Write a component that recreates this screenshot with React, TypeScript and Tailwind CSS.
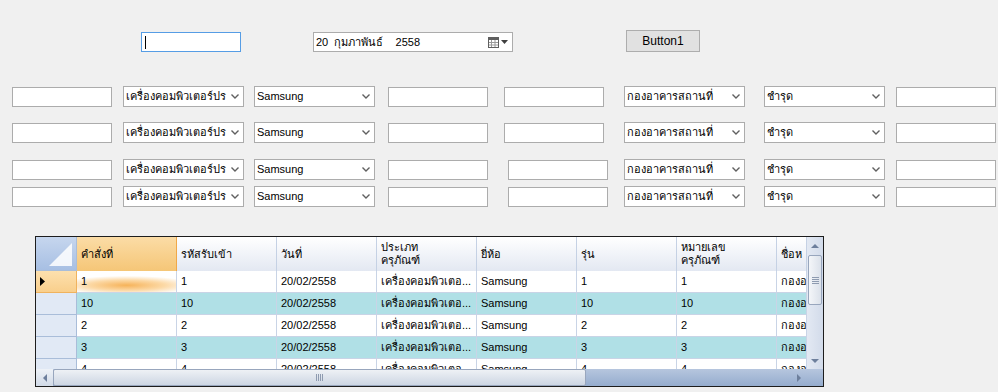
import React from 'react';

const FONT = "font-['Tahoma','Liberation_Sans','Noto_Sans',sans-serif]";

const TextBox: React.FC<{ focused?: boolean }> = ({ focused }) => (
  <div
    className={`w-[100px] h-[20px] bg-white border ${focused ? 'border-[#569de5]' : 'border-[#acacac]'} flex items-center`}
  >
    {focused ? <div className="ml-[3px] w-px h-[13px] bg-black" /> : null}
  </div>
);

const Chevron = () => (
  <svg width="8" height="5" viewBox="0 0 8 5" className="shrink-0">
    <path d="M0.5 0.5 L4 4 L7.5 0.5" fill="none" stroke="#606060" strokeWidth="1.4" />
  </svg>
);

const Combo: React.FC<{ text: string }> = ({ text }) => (
  <div className="w-[121px] h-[21px] bg-white border border-[#acacac] flex items-center pl-[2px] pr-[4px] gap-[3px]">
    <span className="flex-1 overflow-hidden whitespace-nowrap">{text}</span>
    <Chevron />
  </div>
);

const FormRow: React.FC<{ shifted?: boolean; className?: string }> = ({ shifted, className }) => (
  <div className={`flex items-start ${className ?? ''}`}>
    <div className="ml-[12px] mt-px">
      <TextBox />
    </div>
    <div className="ml-[11px]">
      <Combo text="เครื่องคอมพิวเตอร์ปร" />
    </div>
    <div className="ml-[10px]">
      <Combo text="Samsung" />
    </div>
    <div className="ml-[13px] mt-px">
      <TextBox />
    </div>
    <div className={`${shifted ? 'ml-[20px]' : 'ml-[16px]'} mt-px`}>
      <TextBox />
    </div>
    <div className={shifted ? 'ml-[16px]' : 'ml-[20px]'}>
      <Combo text="กองอาคารสถานที่" />
    </div>
    <div className="ml-[19px]">
      <Combo text="ชำรุด" />
    </div>
    <div className="ml-[11px] mt-px">
      <TextBox />
    </div>
  </div>
);

const columns = [
  ['คำสั่งที่'],
  ['รหัสรับเข้า'],
  ['วันที่'],
  ['ประเภท', 'ครุภัณฑ์'],
  ['ยี่ห้อ'],
  ['รุ่น'],
  ['หมายเลข', 'ครุภัณฑ์'],
  ['ชื่อห'],
];

const rows = ['1', '10', '2', '3', '4'];

const HeaderCell: React.FC<{ lines: string[]; selected?: boolean; last?: boolean }> = ({ lines, selected, last }) => (
  <div
    className={`${last ? 'w-[30px]' : 'w-[100px]'} h-full shrink-0 border-r flex flex-col justify-center pl-[4px] leading-[13px] overflow-hidden whitespace-nowrap ${
      selected
        ? 'bg-[linear-gradient(to_bottom,#fbdca6,#f5c677)] border-[#f0a848]'
        : 'bg-[linear-gradient(to_bottom,#ffffff,#e3e8f2)] border-[#c5d1e4]'
    }`}
  >
    {lines.map((l) => (
      <span key={l}>{l}</span>
    ))}
  </div>
);

const DataRow: React.FC<{ id: string; index: number }> = ({ id, index }) => {
  const teal = index % 2 === 1;
  const current = index === 0;
  const cells = [id, id, '20/02/2558', 'เครื่องคอมพิวเตอ...', 'Samsung', id, id, 'กองอา'];
  return (
    <div className="flex h-[22px] shrink-0">
      <div
        className={`w-[41px] h-full shrink-0 border-r border-b flex items-center pl-[4px] ${
          current
            ? 'bg-[linear-gradient(to_bottom,#fde0ae,#f9cf8c)] border-[#f0b35e]'
            : 'bg-[#e1e9f5] border-[#a9bdd9]'
        }`}
      >
        {current ? (
          <svg width="5" height="9" viewBox="0 0 5 9">
            <path d="M0 0 L5 4.5 L0 9 Z" fill="#000" />
          </svg>
        ) : null}
      </div>
      {cells.map((c, i) => (
        <div
          key={i}
          className={`${i === 7 ? 'w-[30px]' : 'w-[100px]'} h-full shrink-0 border-r border-b border-[#c9d4e6] flex items-center pl-[4px] overflow-hidden whitespace-nowrap ${
            current && i === 0
              ? 'bg-[radial-gradient(ellipse_70%_45%_at_50%_68%,#f6b35a,#fcd9a6_55%,#ffffff)]'
              : teal
              ? 'bg-[#b0e0e6]'
              : 'bg-white'
          }`}
        >
          {c}
        </div>
      ))}
    </div>
  );
};

const Arrow: React.FC<{ dir: 'up' | 'down' | 'left' | 'right' }> = ({ dir }) => {
  const d = {
    up: 'M0 4 L4 0 L8 4 Z',
    down: 'M0 0 L8 0 L4 4 Z',
    left: 'M4 0 L4 8 L0 4 Z',
    right: 'M0 0 L4 4 L0 8 Z',
  }[dir];
  const vertical = dir === 'up' || dir === 'down';
  return (
    <svg width={vertical ? 8 : 4} height={vertical ? 4 : 8} viewBox={vertical ? '0 0 8 4' : '0 0 4 8'}>
      <path d={d} fill="#6d7f9c" />
    </svg>
  );
};

const Grip: React.FC<{ vertical?: boolean }> = ({ vertical }) => (
  <div className={`flex ${vertical ? 'flex-col gap-[1px]' : 'flex-row gap-[1px]'}`}>
    {[0, 1, 2, 3].map((i) => (
      <div key={i} className={vertical ? 'w-[7px] h-px bg-[#8e9bb0]' : 'w-px h-[7px] bg-[#8e9bb0]'} />
    ))}
  </div>
);

const DataGrid = () => (
  <div className="ml-[35px] w-[789px] h-[151px] border border-[#1d1d1d] flex flex-col bg-[#aab9d2]">
    <div className="flex h-[132px]">
      <div className="w-[771px] h-full overflow-hidden flex flex-col bg-white">
        <div className="flex h-[34px] shrink-0">
          <div className="w-[41px] h-full shrink-0 border-r border-b border-[#a9bdd9] bg-[linear-gradient(to_bottom,#c6d6ee,#a7bfe3)] relative overflow-hidden">
            <svg width="40" height="33" viewBox="0 0 40 33" className="absolute left-0 top-0">
              <path d="M36 6 L36 29 L13 29 Z" fill="#ffffff" opacity="0.85" />
            </svg>
          </div>
          {columns.map((c, i) => (
            <HeaderCell key={i} lines={c} selected={i === 0} last={i === 7} />
          ))}
        </div>
        {rows.map((r, i) => (
          <DataRow key={r} id={r} index={i} />
        ))}
      </div>
      <div className="w-[16px] h-full flex flex-col bg-[linear-gradient(to_right,#e3e9f3,#d2dbea)]">
        <div className="h-[17px] flex items-center justify-center">
          <Arrow dir="up" />
        </div>
        <div className="mt-[1px] h-[50px] mx-[1px] rounded-[2px] border border-[#98a6bd] bg-[linear-gradient(to_right,#f4f6f9,#dbe1ea)] flex items-center justify-center">
          <Grip vertical />
        </div>
        <div className="flex-1" />
        <div className="h-[17px] flex items-center justify-center">
          <Arrow dir="down" />
        </div>
      </div>
    </div>
    <div className="flex h-[17px]">
      <div className="w-[771px] h-full flex bg-[linear-gradient(to_bottom,#b6c6de,#95acce)]">
        <div className="w-[17px] h-full flex items-center justify-center bg-[linear-gradient(to_bottom,#eef2f7,#d1dae7)]">
          <Arrow dir="left" />
        </div>
        <div className="w-[533px] h-full rounded-[2px] border border-[#98a6bd] bg-[linear-gradient(to_bottom,#eef1f5,#cdd6e3)] flex items-center justify-center">
          <Grip />
        </div>
        <div className="flex-1" />
        <div className="w-[17px] h-full flex items-center justify-center">
          <Arrow dir="right" />
        </div>
      </div>
      <div className="w-[16px] h-full bg-[linear-gradient(to_bottom,#b6c6de,#95acce)]" />
    </div>
  </div>
);

export default function App() {
  return (
    <div className={`w-[998px] h-[392px] bg-[#f0f0f0] overflow-hidden text-[11px] text-black ${FONT}`}>
      <div className="flex items-start pt-[30px]">
        <div className="ml-[141px] mt-[2px]">
          <TextBox focused />
        </div>
        <div className="ml-[72px] mt-[2px] w-[200px] h-[20px] bg-white border border-[#acacac] flex items-center pl-[2px] pr-[4px]">
          <span className="flex-1 whitespace-pre">20  กุมภาพันธ์    2558</span>
          <svg width="11" height="11" viewBox="0 0 11 11" className="mr-[2px]">
            <rect x="0.5" y="0.5" width="10" height="10" fill="#fff" stroke="#5f5f5f" />
            <rect x="0.5" y="0.5" width="10" height="2.5" fill="#5f5f5f" />
            <path d="M3.5 3 V10 M7 3 V10 M1 5.5 H10 M1 8 H10" stroke="#9a9a9a" strokeWidth="1" />
          </svg>
          <svg width="7" height="4" viewBox="0 0 7 4">
            <path d="M0 0 L7 0 L3.5 4 Z" fill="#404040" />
          </svg>
        </div>
        <div className="ml-[113px] w-[74px] h-[22px] bg-[#e1e1e1] border border-[#adadad] flex items-center justify-center text-[12px]">
          Button1
        </div>
      </div>
      <FormRow className="mt-[34px]" />
      <FormRow className="mt-[15px]" />
      <FormRow className="mt-[16px]" shifted />
      <FormRow className="mt-[6px]" shifted />
      <div className="mt-[29px]">
        <DataGrid />
      </div>
    </div>
  );
}
